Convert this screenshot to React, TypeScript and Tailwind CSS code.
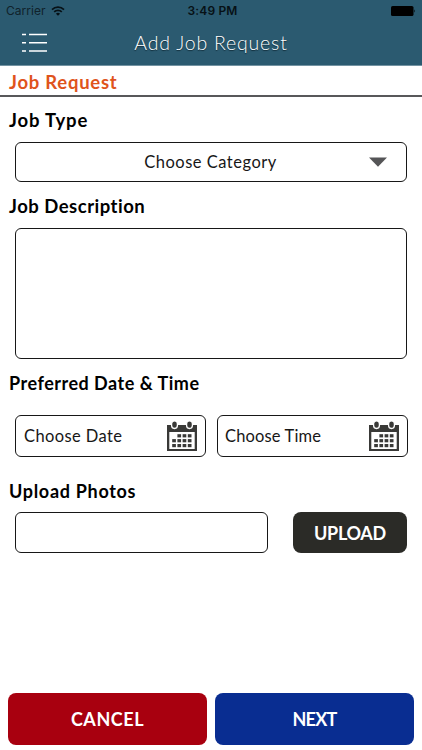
import React from 'react';

const CalendarIcon = () => (
  <svg width="32" height="32" viewBox="0 0 32 32" className="shrink-0">
    <path d="M1 5h30v26H1z" fill="#393937" />
    <path d="M3.3 12h25.4v17H3.3z" fill="#fff" />
    {[8, 23].map((x) => (
      <rect key={x} x={x - 2.4} y="0.9" width="5.8" height="7.6" rx="2.9" fill="#393937" stroke="#fff" strokeWidth="1.3" />
    ))}
    {[14.2, 19.1, 24].map((y, row) =>
      [6.2, 11.4, 16.6, 21.8].map((x, col) =>
        row === 0 && col === 0 ? null : <rect key={`${x}-${y}`} x={x} y={y} width="3.7" height="3.2" fill="#393937" />,
      ),
    )}
  </svg>
);

const Label = ({ children, className }: { children: React.ReactNode; className: string }) => (
  <h2 className={`ml-[9px] h-6 self-start whitespace-nowrap font-bold leading-6 ${className}`}>{children}</h2>
);

export default function App() {
  return (
    <div className="flex h-[750px] w-full flex-col overflow-hidden bg-white font-['Lato',sans-serif] text-black">
      <header className="h-[66px] shrink-0 border-b border-[#7393a2] bg-[#2b5a70]">
        <div className="grid h-[22px] grid-cols-3 items-center px-[6px] font-['Inter',sans-serif] text-[12px] leading-[22px]">
          <div className="flex items-center gap-[5px] text-[#10222b]">
            <span className="text-[12px] tracking-[0.05px]">Carrier</span>
            <svg width="14" height="10" viewBox="0 0 14 10" fill="none" stroke="#071116" strokeWidth="1.7">
              <path d="M1 3.7a8.5 8.5 0 0 1 12 0M3.2 5.9a5.4 5.4 0 0 1 7.6 0" />
              <path d="M4.9 7.7a3 3 0 0 1 4.2 0L7 9.8z" fill="#071116" stroke="none" />
            </svg>
          </div>
          <span className="pl-[3px] text-center text-[12px] font-semibold tracking-[0.15px] text-[#071116]">3:49 PM</span>
          <svg width="25" height="10" viewBox="0 0 25 10" className="justify-self-end">
            <rect width="22.5" height="10" rx="1.6" fill="#000" />
            <path d="M23.3 3.3q1.5 1.7 0 3.4z" fill="#000" />
          </svg>
        </div>
        <div className="grid h-[42px] grid-cols-[50px_1fr_50px] items-center">
          <svg width="27" height="20" viewBox="0 0 27 20" className="ml-[21px]" stroke="#fff" strokeWidth="1.5">
            <path d="M1 1.5h4M8 1.5h18M1 9.7h4M8 9.7h18M1 17.9h4M8 17.9h18" />
          </svg>
          <h1 className="text-center text-[19.5px] font-light leading-6 tracking-[0.8px] text-white [text-shadow:0_1px_1px_#102b38]">Add Job Request</h1>
        </div>
      </header>
      <div className="flex h-[31px] shrink-0 border-b-2 border-[#58585a] pt-[4px]">
        <Label className="text-[18.5px] tracking-[0.75px] text-[#df541c]">Job Request</Label>
      </div>
      <main className="flex flex-1 flex-col">
        <Label className="mt-[11px] text-[18.5px] tracking-[0.85px]">Job Type</Label>
        <div className="mx-[15px] mt-[10px] flex h-10 items-center rounded-[6px] border border-[#171717] pr-[18px]">
          <span className="flex-1 pl-[37px] pt-px text-center text-[16.5px] tracking-[0.5px] text-[#171717]">Choose Category</span>
          <svg width="20" height="10" viewBox="0 0 20 10">
            <path d="M1 .5h18L10 9.7z" fill="#555557" />
          </svg>
        </div>
        <Label className="mt-[12px] text-[18.5px] tracking-[0.5px]">Job Description</Label>
        <div className="mx-[15px] mt-[10px] h-[131px] rounded-[6px] border border-[#171717]" />
        <Label className="mt-[12px] text-[18px] tracking-[0.5px]">Preferred Date &amp; Time</Label>
        <div className="mt-[20px] flex gap-[11px] pl-[15px]">
          <div className="flex h-[42px] w-[191px] items-center justify-between rounded-[6px] border border-[#171717] pl-2 pr-[7px]">
            <span className="pt-px text-[16.5px] tracking-[0.4px] text-[#171717]">Choose Date</span>
            <CalendarIcon />
          </div>
          <div className="flex h-[42px] w-[191px] items-center justify-between rounded-[6px] border border-[#171717] pl-[7px] pr-[7px]">
            <span className="pt-px text-[16.5px] tracking-[0.15px] text-[#171717]">Choose Time</span>
            <CalendarIcon />
          </div>
        </div>
        <Label className="mt-[22px] text-[18px] tracking-[0.7px]">Upload Photos</Label>
        <div className="mt-[9px] flex gap-[25px] pl-[15px]">
          <div className="h-[41px] w-[253px] rounded-[6px] border border-[#171717]" />
          <button className="h-[41px] w-[114px] rounded-[8px] bg-[#2b2b27] pt-px text-[18px] font-bold leading-6 tracking-[-0.3px] text-white">UPLOAD</button>
        </div>
      </main>
      <footer className="mb-[5px] flex gap-2 px-2 text-[18px] font-bold text-white">
        <button className="h-[52px] flex-1 rounded-[8px] bg-[#a8000f] pt-px tracking-[0.55px]">CANCEL</button>
        <button className="h-[52px] flex-1 rounded-[8px] bg-[#092d91] pt-px tracking-[-0.8px]">NEXT</button>
      </footer>
    </div>
  );
}
